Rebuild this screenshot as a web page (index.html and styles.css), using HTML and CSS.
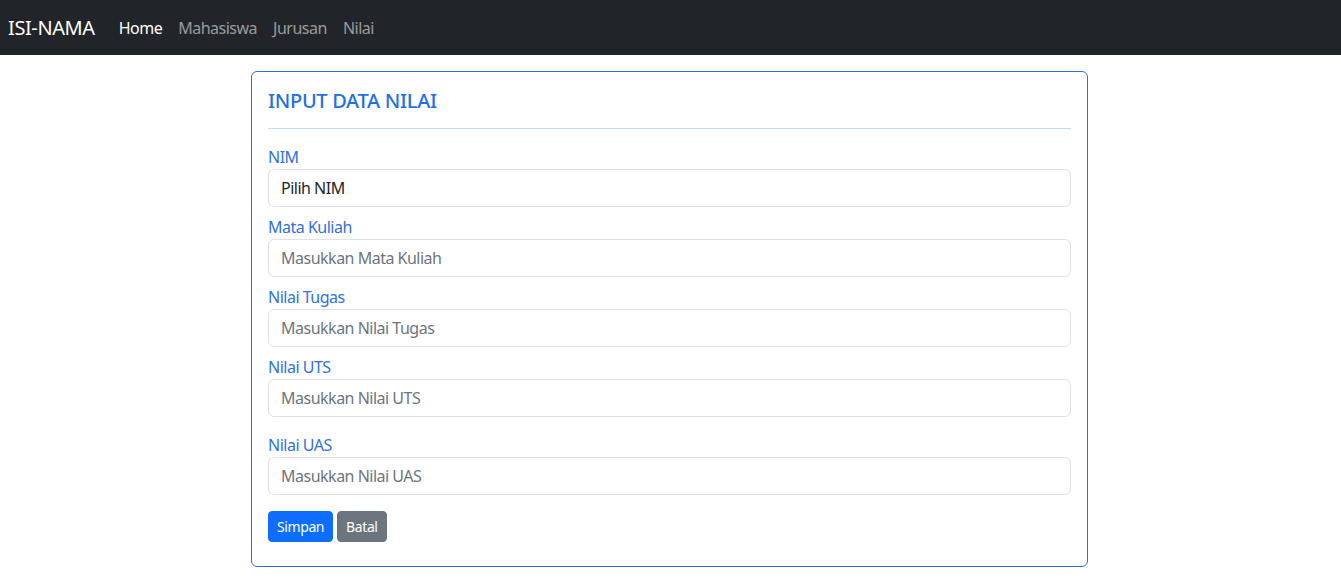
FILE: index.html
```html
<!DOCTYPE html>
<html lang="id">
<head>
<meta charset="utf-8">
<title>Input Data Nilai</title>
<link rel="stylesheet" href="styles.css">
</head>
<body>
<nav class="navbar">
  <a class="brand" href="#">ISI-NAMA</a>
  <ul class="nav">
    <li><a class="nav-link active" href="#">Home</a></li>
    <li><a class="nav-link" href="#">Mahasiswa</a></li>
    <li><a class="nav-link" href="#">Jurusan</a></li>
    <li><a class="nav-link" href="#">Nilai</a></li>
  </ul>
</nav>
<main class="wrap">
  <div class="card">
    <h4 class="title">INPUT DATA NILAI</h4>
    <hr class="sep">
    <form class="form">
      <div class="field">
        <label class="label">NIM</label>
        <div class="control select">Pilih NIM</div>
      </div>
      <div class="field">
        <label class="label">Mata Kuliah</label>
        <input class="control" placeholder="Masukkan Mata Kuliah">
      </div>
      <div class="field">
        <label class="label">Nilai Tugas</label>
        <input class="control" placeholder="Masukkan Nilai Tugas">
      </div>
      <div class="field field-lg">
        <label class="label">Nilai UTS</label>
        <input class="control" placeholder="Masukkan Nilai UTS">
      </div>
      <div class="field field-lg">
        <label class="label">Nilai UAS</label>
        <input class="control" placeholder="Masukkan Nilai UAS">
      </div>
      <div class="actions">
        <button type="button" class="btn btn-primary">Simpan</button>
        <button type="button" class="btn btn-secondary">Batal</button>
      </div>
    </form>
  </div>
</main>
</body>
</html>
```
FILE: styles.css
```css
* { box-sizing: border-box; }
body {
  margin: 0;
  font-family: "Noto Sans", "Open Sans", "Liberation Sans", sans-serif;
  font-size: 16px;
  line-height: 1.5;
  letter-spacing: -0.5px;
  color: #212529;
  background: #fff;
}
.navbar {
  background: #212529;
  height: 55px;
  display: flex;
  align-items: center;
  padding: 0 8px;
}
.brand {
  color: #fff;
  text-decoration: none;
  font-size: 20px;
  line-height: 30px;
  margin-right: 16px;
  letter-spacing: -0.4px;
}
.nav {
  display: flex;
  list-style: none;
  margin: 0;
  padding: 0;
}
.nav-link {
  display: block;
  padding: 8px;
  color: rgba(255,255,255,0.55);
  text-decoration: none;
}
.nav-link.active { color: #fff; }
.wrap {
  padding: 16px 0 0 251px;
}
.card {
  width: 837px;
  border: 1px solid #2a6fd6;
  border-radius: 6px;
  padding: 16px 16px 24px;
  color: #1f6fe5;
}
.title {
  margin: 0;
  font-size: 20px;
  line-height: 26px;
  font-weight: 500;
  letter-spacing: -0.3px;
  color: #1f6fe5;
}
.sep {
  margin: 14px 0 16px;
  border: 0;
  border-top: 1px solid #c7d9f5;
}
.form { display: flex; flex-direction: column; }
.field { display: flex; flex-direction: column; margin-bottom: 8px; }
.field-lg { margin-bottom: 16px; }
.label {
  font-size: 16px;
  line-height: 24px;
  color: #2f72dc;
}
.control {
  height: 38px;
  padding: 6px 12px;
  font: inherit;
  font-size: 16px;
  line-height: 24px;
  letter-spacing: -0.5px;
  color: #212529;
  background: #fff;
  border: 1px solid #dee2e6;
  border-radius: 6px;
  outline: none;
}
.control::placeholder { color: #6c757d; opacity: 1; }
.actions { display: flex; gap: 4px; }
.btn {
  height: 31px;
  padding: 4px 8px;
  font-family: inherit;
  font-size: 14px;
  line-height: 21px;
  letter-spacing: -0.4px;
  color: #fff;
  border: 1px solid transparent;
  border-radius: 4px;
}
.btn-primary { background: #0d6efd; border-color: #0d6efd; }
.btn-secondary { background: #6c757d; border-color: #6c757d; }
```
